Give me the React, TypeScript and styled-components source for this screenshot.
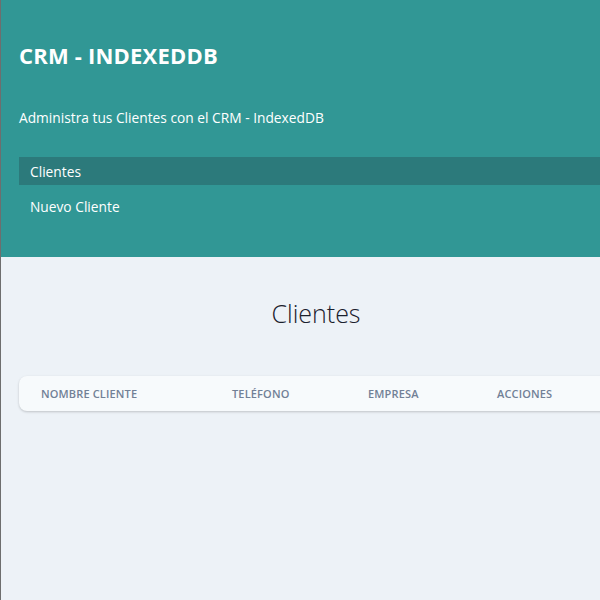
import React from "react";
import styled, { createGlobalStyle } from "styled-components";

const Global = createGlobalStyle`
  html, body { margin: 0; padding: 0; }
  body {
    background: #edf2f7;
    font-family: "Open Sans", "Noto Sans", sans-serif;
    overflow: hidden;
  }
`;

const Viewport = styled.div`
  width: 600px;
  height: 600px;
  overflow: hidden;
`;

const Frame = styled.div`
  display: flex;
  flex-direction: column;
  min-height: 600px;
  width: 630px;
  border-left: 1px solid #6e6e6e;
`;

const Sidebar = styled.aside`
  background: #319795;
  padding: 18px 0 18px 18px;
  height: 257px;
  box-sizing: border-box;
`;

const Title = styled.h1`
  margin: 22px 0 0;
  color: #fff;
  font-size: 22px;
  font-weight: 700;
  line-height: 30px;
  letter-spacing: 0.2px;
`;

const Subtitle = styled.p`
  margin: 38px 0 0;
  color: #fff;
  font-size: 13.75px;
  line-height: 20px;
`;

const Nav = styled.nav`
  margin-top: 29px;
  display: flex;
  flex-direction: column;
  gap: 7px;
`;

const NavLink = styled.a<{ $active?: boolean }>`
  display: block;
  padding: 5px 11px 3px;
  line-height: 20px;
  font-size: 13.75px;
  color: #fff;
  text-decoration: none;
  background: ${(p) => (p.$active ? "#2c7a7b" : "transparent")};
`;

const Main = styled.main`
  padding: 38px 18px;
`;

const Heading = styled.h2`
  margin: 0;
  text-align: center;
  font-size: 25px;
  font-weight: 300;
  color: #1a202c;
  line-height: 36px;
`;

const Table = styled.div`
  margin-top: 45px;
  background: #f7fafc;
  border-radius: 8px;
  box-shadow: 0 1px 3px rgba(0, 0, 0, 0.12), 0 1px 2px rgba(0, 0, 0, 0.08);
  display: grid;
  grid-template-columns: 191px 136px 129px 1fr;
  overflow: hidden;
`;

const Th = styled.div`
  padding: 10px 22px;
  font-size: 11px;
  font-weight: 600;
  text-transform: uppercase;
  color: #718096;
  line-height: 15px;
  letter-spacing: 0.15px;
`;

export default function App() {
  return (
    <Viewport>
      <Global />
      <Frame>
        <Sidebar>
          <Title>CRM - INDEXEDDB</Title>
          <Subtitle>Administra tus Clientes con el CRM - IndexedDB</Subtitle>
          <Nav>
            <NavLink $active href="#">Clientes</NavLink>
            <NavLink href="#">Nuevo Cliente</NavLink>
          </Nav>
        </Sidebar>
        <Main>
          <Heading>Clientes</Heading>
          <Table>
            <Th>Nombre Cliente</Th>
            <Th>Teléfono</Th>
            <Th>Empresa</Th>
            <Th>Acciones</Th>
          </Table>
        </Main>
      </Frame>
    </Viewport>
  );
}
